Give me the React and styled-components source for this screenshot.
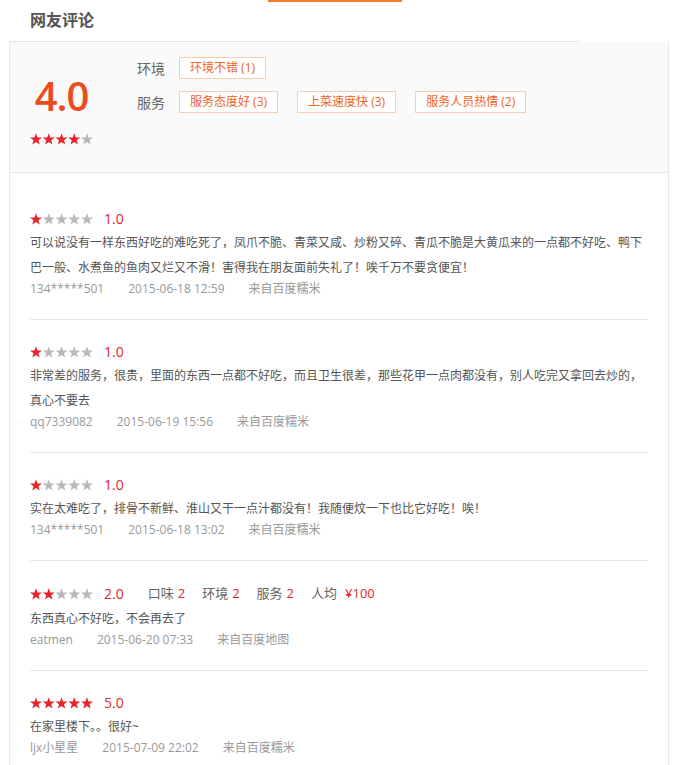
import React from 'react'
import styled, { createGlobalStyle } from 'styled-components'

const GlobalStyle = createGlobalStyle`
  body {
    margin: 0;
    background: #fff;
    font-family: "Open Sans", "Noto Sans CJK SC", sans-serif;
  }
`

const Page = styled.div`
  width: 688px;
`

const Accent = styled.div`
  width: 134px;
  height: 2px;
  margin-left: 268px;
  background: #f47a30;
`

const Title = styled.h2`
  margin: 0;
  height: 39px;
  padding-left: 30px;
  font-size: 16px;
  font-weight: bold;
  line-height: 36px;
  color: #555;
`

const Panel = styled.section`
  width: 660px;
  margin-left: 9px;
  box-sizing: border-box;
  border-left: 1px solid #e8e8e8;
  border-right: 1px solid #e8e8e8;

  &::before {
    content: '';
    display: block;
    width: 569px;
    height: 1px;
    background: #e5e5e5;
  }
`

const Summary = styled.div`
  display: flex;
  height: 130px;
  padding-left: 20px;
  background: #fafafa;
  border-bottom: 1px solid #e8e8e8;
`

const ScoreBox = styled.div`
  display: flex;
  flex-direction: column;
  align-items: center;
  width: 63px;
  padding-top: 34px;
`

const BigScore = styled.div`
  font-size: 40px;
  font-weight: 600;
  letter-spacing: -1px;
  line-height: 40px;
  color: #ee4b1d;
  margin-bottom: 17px;
`

const TagGroups = styled.div`
  margin-left: 44px;
  padding-top: 15px;
`

const TagRow = styled.div`
  display: flex;
  align-items: center;
  height: 22px;
  & + & {
    margin-top: 12px;
  }
`

const TagLabel = styled.span`
  width: 42px;
  font-size: 14px;
  color: #666;
`

const Tag = styled.span`
  box-sizing: border-box;
  height: 22px;
  padding: 0 10px;
  margin-right: 19px;
  border: 1px solid #f8cdb0;
  background: #fff;
  font-size: 12px;
  line-height: 20px;
  color: #f0641e;
`

const List = styled.div`
  padding: 14px 20px 0;
`

const Review = styled.div`
  padding: 22px 0 21px;
  border-bottom: 1px solid #e8e8e8;
  &:last-child {
    border-bottom: none;
  }
`

const StarRow = styled.div`
  display: flex;
  align-items: center;
  min-height: 19px;
`

const Score = styled.span`
  margin-left: 11px;
  font-size: 14px;
  line-height: 19px;
  color: #e4262b;
`

const Extras = styled.div`
  display: flex;
  margin-left: 24px;
  font-size: 13px;
  line-height: 21px;
  color: #666;
`

const Extra = styled.span`
  margin-right: 17px;
  em {
    font-style: normal;
    color: #e4262b;
    margin-left: ${p => (p.$wide ? 8 : 4)}px;
  }
`

const Text = styled.p`
  margin: 2px 0 0;
  font-size: 12px;
  line-height: 25px;
  color: #555;
`

const Meta = styled.div`
  font-size: 12px;
  line-height: 18px;
  color: #999;
  span {
    margin-right: 24px;
  }
`

const STAR = '6,0.2 7.53,4.4 12,4.55 8.47,7.3 9.7,11.6 6,9.1 2.3,11.6 3.53,7.3 0,4.55 4.47,4.4'

const Stars = ({ value }) => (
  <svg width="63" height="12" viewBox="0 0 63 12" style={{ display: 'block' }}>
    {[0, 1, 2, 3, 4].map(i => (
      <polygon
        key={i}
        points={STAR}
        transform={`translate(${i * 12.75} 0)`}
        fill={i < value ? '#e8232b' : '#b9b9b9'}
      />
    ))}
  </svg>
)

const reviews = [
  {
    stars: 1,
    score: '1.0',
    text: '可以说没有一样东西好吃的难吃死了，凤爪不脆、青菜又咸、炒粉又碎、青瓜不脆是大黄瓜来的一点都不好吃、鸭下巴一般、水煮鱼的鱼肉又烂又不滑！害得我在朋友面前失礼了！唉千万不要贪便宜！',
    user: '134*****501',
    time: '2015-06-18 12:59',
    from: '来自百度糯米'
  },
  {
    stars: 1,
    score: '1.0',
    text: '非常差的服务，很贵，里面的东西一点都不好吃，而且卫生很差，那些花甲一点肉都没有，别人吃完又拿回去炒的，真心不要去',
    user: 'qq7339082',
    time: '2015-06-19 15:56',
    from: '来自百度糯米'
  },
  {
    stars: 1,
    score: '1.0',
    text: '实在太难吃了，排骨不新鲜、淮山又干一点汁都没有！我随便炆一下也比它好吃！唉！',
    user: '134*****501',
    time: '2015-06-18 13:02',
    from: '来自百度糯米'
  },
  {
    stars: 2,
    score: '2.0',
    extras: [['口味', '2'], ['环境', '2'], ['服务', '2'], ['人均', '¥100']],
    text: '东西真心不好吃，不会再去了',
    user: 'eatmen',
    time: '2015-06-20 07:33',
    from: '来自百度地图'
  },
  {
    stars: 5,
    score: '5.0',
    text: '在家里楼下。。很好~',
    user: 'ljx小星星',
    time: '2015-07-09 22:02',
    from: '来自百度糯米'
  }
]

const App = () => (
  <Page>
    <GlobalStyle />
    <Accent />
    <Title>网友评论</Title>
    <Panel>
      <Summary>
        <ScoreBox>
          <BigScore>4.0</BigScore>
          <Stars value={4} />
        </ScoreBox>
        <TagGroups>
          <TagRow>
            <TagLabel>环境</TagLabel>
            <Tag>环境不错 (1)</Tag>
          </TagRow>
          <TagRow>
            <TagLabel>服务</TagLabel>
            <Tag>服务态度好 (3)</Tag>
            <Tag>上菜速度快 (3)</Tag>
            <Tag>服务人员热情 (2)</Tag>
          </TagRow>
        </TagGroups>
      </Summary>
      <List>
        {reviews.map((r, i) => (
          <Review key={i}>
            <StarRow>
              <Stars value={r.stars} />
              <Score>{r.score}</Score>
              {r.extras && (
                <Extras>
                  {r.extras.map(([k, v]) => (
                    <Extra key={k} $wide={v.length > 2}>
                      {k}<em>{v}</em>
                    </Extra>
                  ))}
                </Extras>
              )}
            </StarRow>
            <Text>{r.text}</Text>
            <Meta>
              <span>{r.user}</span>
              <span>{r.time}</span>
              <span>{r.from}</span>
            </Meta>
          </Review>
        ))}
      </List>
    </Panel>
  </Page>
)

export default App
